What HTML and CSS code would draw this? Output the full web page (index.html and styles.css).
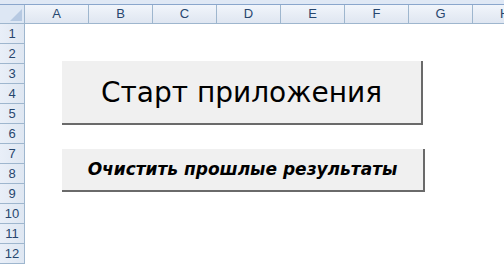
FILE: index.html
```html
<!DOCTYPE html>
<html lang="ru">
<head>
    <meta charset="UTF-8">
    <meta name="viewport" content="width=device-width, initial-scale=1.0">
    <title>Лист1</title>
    <link rel="stylesheet" href="styles.css">
</head>
<body>
    <div class="sheet">
        <div class="topstrip"></div>
        <div class="colheads">
            <div class="corner"><span class="tri"></span></div>
            <div class="col">A</div>
            <div class="col">B</div>
            <div class="col">C</div>
            <div class="col">D</div>
            <div class="col">E</div>
            <div class="col">F</div>
            <div class="col">G</div>
            <div class="col">H</div>
        </div>
        <div class="body">
            <div class="rowheads">
                <div class="row">1</div>
                <div class="row">2</div>
                <div class="row">3</div>
                <div class="row">4</div>
                <div class="row">5</div>
                <div class="row">6</div>
                <div class="row">7</div>
                <div class="row">8</div>
                <div class="row">9</div>
                <div class="row">10</div>
                <div class="row">11</div>
                <div class="row">12</div>
            </div>
            <div class="cells">
                <button class="btn btn-start">Старт приложения</button>
                <button class="btn btn-clear">Очистить прошлые результаты</button>
            </div>
        </div>
    </div>
</body>
</html>
```

FILE: styles.css
```css
*{
    margin: 0;
    padding: 0;
    box-sizing: border-box;
}
body{
    width: 504px;
    height: 265px;
    overflow: hidden;
    background: #fff;
    font-family: "Liberation Sans", Arial, sans-serif;
}
.topstrip{
    height: 5px;
    background: #dfe8f5;
    border-bottom: 1px solid #8aa6cc;
}
.colheads{
    display: flex;
    height: 19px;
    overflow: hidden;
    background: linear-gradient(#f1f5fb, #dfe6f1);
    border-bottom: 1px solid #9eb6ce;
}
.corner{
    width: 25px;
    flex: none;
    position: relative;
    border-right: 1px solid #9eb6ce;
    background: #dde7f4;
}
.tri{
    position: absolute;
    right: 2px;
    bottom: 2px;
    width: 0;
    height: 0;
    border-left: 12px solid transparent;
    border-bottom: 12px solid #b6c9e2;
}
.col{
    width: 64px;
    flex: none;
    border-right: 1px solid #9eb6ce;
    text-align: center;
    font-size: 13px;
    line-height: 18px;
    color: #27466e;
}
.col:last-child{
    width: 31px;
    text-align: left;
    padding-left: 27px;
    border-right: none;
}
.body{
    display: flex;
}
.rowheads{
    width: 25px;
    flex: none;
    background: linear-gradient(90deg, #e9eff8, #dfe7f2);
    border-right: 1px solid #9eb6ce;
}
.row{
    height: 20px;
    border-bottom: 1px solid #9eb6ce;
    text-align: center;
    font-size: 13px;
    line-height: 19px;
    color: #27466e;
}
.cells{
    flex: 1;
    position: relative;
}
.btn{
    position: absolute;
    background: #f0f0f0;
    border: none;
    border-right: 2px solid #6a6a6a;
    border-bottom: 2px solid #6a6a6a;
    color: #000;
    white-space: nowrap;
}
.btn-start{
    left: 37px;
    top: 37px;
    width: 361px;
    height: 64px;
    font-family: "DejaVu Sans", sans-serif;
    font-size: 28px;
}
.btn-clear{
    left: 37px;
    top: 125px;
    width: 363px;
    height: 43px;
    padding-bottom: 2px;
    font-family: "DejaVu Sans", sans-serif;
    font-weight: bold;
    font-style: italic;
    font-size: 17px;
}
```
